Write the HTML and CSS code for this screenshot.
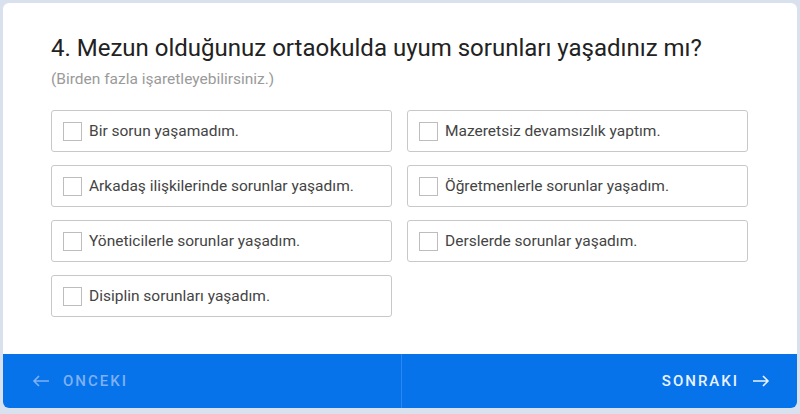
FILE: index.html
```html
<!DOCTYPE html>
<html lang="tr">
<head>
  <meta charset="UTF-8" />
  <meta name="viewport" content="width=device-width, initial-scale=1.0" />
  <title>Anket - Soru 4</title>
  <link rel="stylesheet" href="styles.css">
</head>
<body>
  <div class="card">
    <div class="question">
      <h1>4. Mezun olduğunuz ortaokulda uyum sorunları yaşadınız mı?</h1>
      <p class="hint">(Birden fazla işaretleyebilirsiniz.)</p>
      <div class="options">
        <label class="option"><span class="box"></span>Bir sorun yaşamadım.</label>
        <label class="option"><span class="box"></span>Mazeretsiz devamsızlık yaptım.</label>
        <label class="option"><span class="box"></span>Arkadaş ilişkilerinde sorunlar yaşadım.</label>
        <label class="option"><span class="box"></span>Öğretmenlerle sorunlar yaşadım.</label>
        <label class="option"><span class="box"></span>Yöneticilerle sorunlar yaşadım.</label>
        <label class="option"><span class="box"></span>Derslerde sorunlar yaşadım.</label>
        <label class="option"><span class="box"></span>Disiplin sorunları yaşadım.</label>
      </div>
    </div>
    <div class="footer">
      <button class="nav prev" disabled>
        <svg width="18" height="12" viewBox="0 0 18 12"><path d="M17 6H2M7 1L2 6l5 5" fill="none" stroke="currentColor" stroke-width="1.6"/></svg>
        ONCEKI
      </button>
      <button class="nav next">
        SONRAKI
        <svg width="18" height="12" viewBox="0 0 18 12"><path d="M1 6h15M11 1l5 5-5 5" fill="none" stroke="currentColor" stroke-width="1.6"/></svg>
      </button>
    </div>
  </div>
</body>
</html>
```

FILE: styles.css
```css
* {
  margin: 0;
  padding: 0;
  box-sizing: border-box;
}
body {
  font-family: Roboto, 'Liberation Sans', sans-serif;
  background: #d9e0ee;
  padding: 3px;
}
.card {
  background: #fff;
  border-radius: 6px;
  width: 794px;
  overflow: hidden;
}
.question {
  padding: 30px 49px 37px 48px;
}
h1 {
  font-size: 24px;
  font-weight: 400;
  line-height: 30px;
  color: #222;
}
.hint {
  font-size: 15.5px;
  line-height: 20px;
  color: #9a9a9a;
  margin-top: 6px;
}
.options {
  display: grid;
  grid-template-columns: 341px 341px;
  column-gap: 15px;
  row-gap: 13px;
  margin-top: 21px;
}
.option {
  display: flex;
  align-items: center;
  height: 42px;
  padding-left: 11px;
  border: 1px solid #c8c8c8;
  border-radius: 3px;
  font-size: 15.5px;
  color: #444;
  cursor: pointer;
}
.box {
  width: 19px;
  height: 19px;
  border: 1px solid #bdbdbd;
  margin-right: 7px;
  flex-shrink: 0;
}
.footer {
  display: flex;
  background: #0673ea;
  height: 54px;
}
.nav {
  flex: 1;
  display: flex;
  align-items: center;
  gap: 13px;
  background: none;
  border: none;
  font-family: inherit;
  font-size: 15px;
  font-weight: 500;
  letter-spacing: 2px;
  cursor: pointer;
}
.prev {
  color: #7fb0f3;
  padding-left: 29px;
  border-right: 1px solid #2a88f0;
}
.next {
  color: #eaf2ff;
  justify-content: flex-end;
  padding-right: 27px;
}
```
